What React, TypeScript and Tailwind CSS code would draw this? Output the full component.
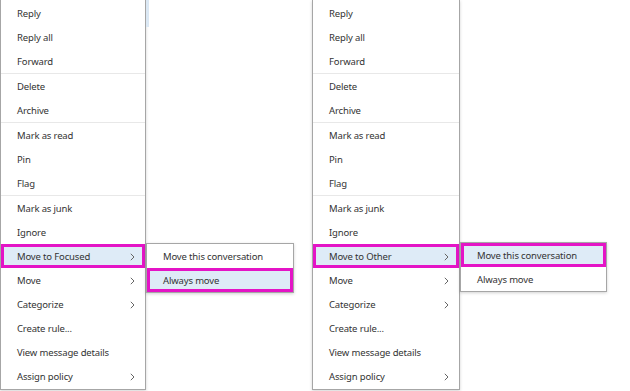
import React from "react";

type Entry = { label: string; sub?: boolean; hl?: boolean } | "sep";

const font = { fontFamily: '"Noto Sans", Lato, sans-serif' };

const Chevron = () => (
  <svg width="5" height="8" viewBox="0 0 5 8" className="shrink-0">
    <path d="M0.8 0.8 L4 4 L0.8 7.2" fill="none" stroke="#666" strokeWidth="1" />
  </svg>
);

const menuItems = (target: string): Entry[] => [
  { label: "Reply" },
  { label: "Reply all" },
  { label: "Forward" },
  "sep",
  { label: "Delete" },
  { label: "Archive" },
  "sep",
  { label: "Mark as read" },
  { label: "Pin" },
  { label: "Flag" },
  "sep",
  { label: "Mark as junk" },
  { label: "Ignore" },
  { label: target, sub: true, hl: true },
  { label: "Move", sub: true },
  { label: "Categorize", sub: true },
  { label: "Create rule..." },
  { label: "View message details" },
  { label: "Assign policy", sub: true },
];

const Menu = ({ target, width }: { target: string; width: string }) => (
  <div
    className={`${width} bg-white border-x border-b border-[#a6a6a6] pt-px shadow-[0_1px_3px_rgba(0,0,0,0.18)] shrink-0`}
  >
    {menuItems(target).map((item, i) =>
      item === "sep" ? (
        <div key={i} className="h-px bg-[#e8e8e8]" />
      ) : (
        <div
          key={i}
          className={`h-6 pt-[2px] flex items-center justify-between text-[9.5px] tracking-[-0.15px] text-[#333] ${
            item.hl
              ? "bg-[#deebf7] border-[3px] border-[#e414c6] pl-[13px] pr-[7px]"
              : "pl-[16px] pr-[10px]"
          }`}
        >
          <span>{item.label}</span>
          {item.sub && <Chevron />}
        </div>
      )
    )}
    <div className="h-px" />
  </div>
);

const SubMenu = ({ hlIndex, width }: { hlIndex: number; width: string }) => (
  <div
    className={`${width} bg-white border border-[#a6a6a6] shadow-[0_1px_3px_rgba(0,0,0,0.18)] shrink-0`}
  >
    {["Move this conversation", "Always move"].map((label, i) => (
      <div
        key={label}
        className={`h-6 pt-[2px] flex items-center text-[9.5px] tracking-[-0.15px] text-[#333] ${
          i === hlIndex ? "bg-[#deebf7] border-[3px] border-[#e414c6] pl-[13px]" : "pl-[16px]"
        }`}
      >
        {label}
      </div>
    ))}
  </div>
);

export default function App() {
  return (
    <div className="w-[630px] h-[391px] bg-white overflow-hidden flex items-start" style={font}>
      <div className="flex items-start">
        <Menu target="Move to Focused" width="w-[146px]" />
        <div className="w-[3px] h-[27px] bg-[#dbe8f4] shrink-0" />
      </div>
      <div className="-ml-[3px] mt-[243px]">
        <SubMenu hlIndex={1} width="w-[148px]" />
      </div>
      <div className="ml-[18px] flex items-start">
        <Menu target="Move to Other" width="w-[148px]" />
        <div className="mt-[242px]">
          <SubMenu hlIndex={0} width="w-[147px]" />
        </div>
      </div>
    </div>
  );
}
